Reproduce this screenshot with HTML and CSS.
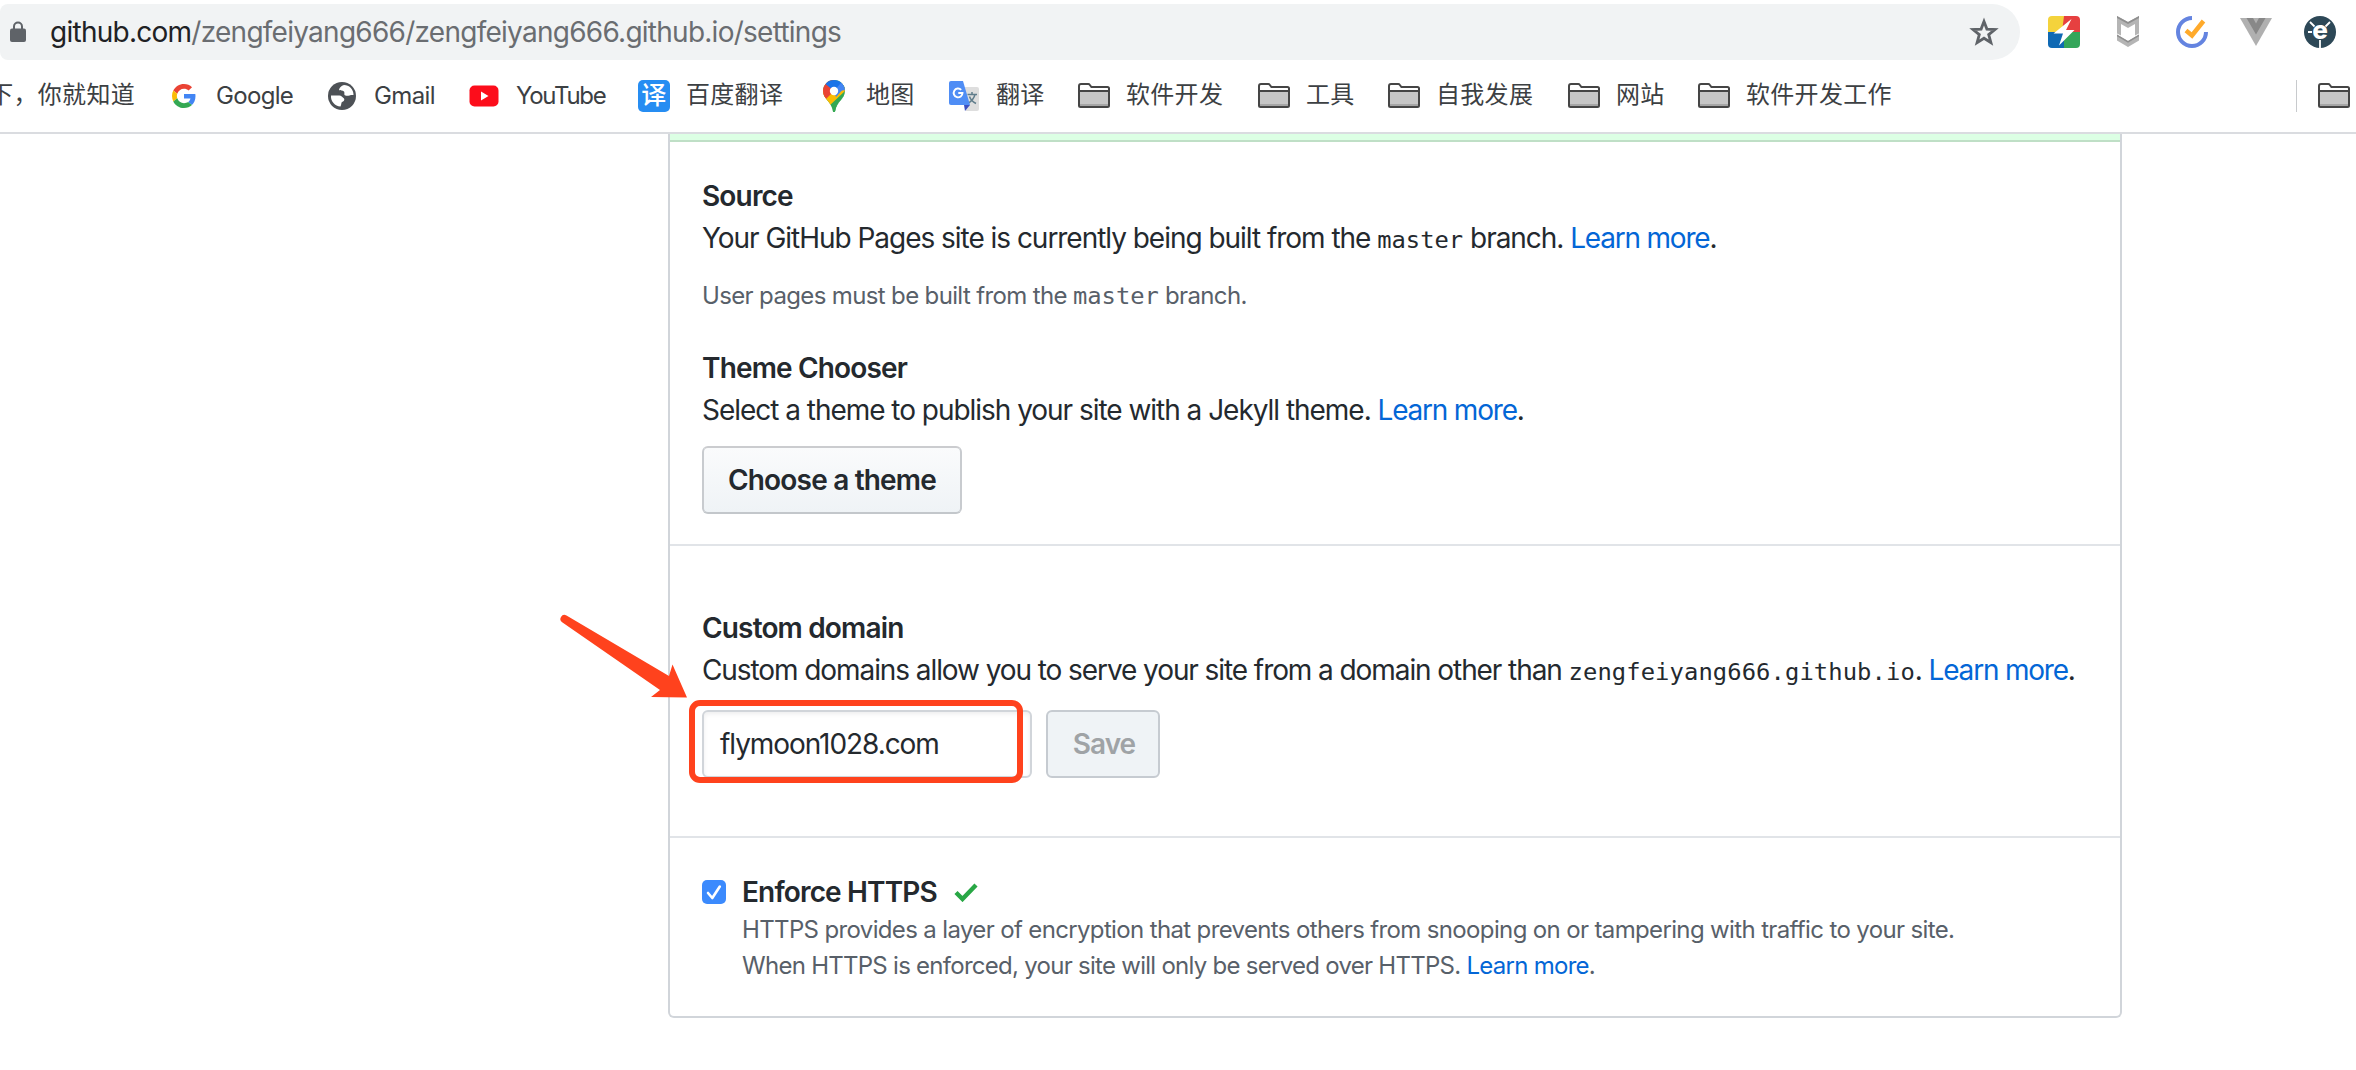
FILE: index.html
```
<!DOCTYPE html>
<html lang="en">
<head>
<meta charset="utf-8">
<title>Settings</title>
<link rel="stylesheet" href="styles.css">
</head>
<body>
<svg class="defs" width="0" height="0">
  <symbol id="folder" viewBox="0 0 32 26">
    <path d="M1 3.2Q1 1 3 1h7.2l3.2 3.2H29q2 0 2 2V22.500q0 1.500-1.500 1.500H2.500Q1 24 1 22.500z" fill="#fff"/>
    <path d="M2 8.500h28V23H2z" fill="#c6c6c6"/>
    <path d="M2 21h28v2.200H2z" fill="#a6a6a6"/>
    <path d="M1 8h30M1 3Q1 1 3 1h7.200q1 0 1.500.8L13.400 4H29.500q1.500 0 1.500 1.500V22.500q0 1.500-1.500 1.500H2.500Q1 24 1 22.500z" fill="none" stroke="#454545" stroke-width="2"/>
  </symbol>
</svg>

<header class="browser">
  <div class="toolbar">
    <div class="omnibox">
      <svg class="lock" width="16" height="22" viewBox="0 0 16 22"><path d="M4 9V5.500a4 4 0 0 1 8 0V9" fill="none" stroke="#5f6368" stroke-width="2"/><rect y="7.500" width="16" height="13.500" rx="2" fill="#5f6368"/></svg>
      <div class="url"><span class="host">github.com</span>/zengfeiyang666/zengfeiyang666.github.io/settings</div>
      <svg class="star" width="30" height="30" viewBox="0 0 30 30"><path d="M15 4.500l2.900 7.600 8.100.4-6.300 5.100 2.200 8L15 21.200l-6.900 4.400 2.200-8L4 12.500l8.100-.4z" fill="none" stroke="#5f6368" stroke-width="2.800"/></svg>
    </div>
    <div class="extensions">
      <svg width="32" height="32" viewBox="0 0 32 32"><path d="M4 0h15l-3 16H0V4Q0 0 4 0z" fill="#f4d33c"/><path d="M16 0h12q4 0 4 4v12H14z" fill="#e64040"/><path d="M0 16h16v16H4q-4 0-4-4z" fill="#0f69b4"/><path d="M16 16h16v12q0 4-4 4H16z" fill="#34a65a"/><path d="M23.500 3L5.500 17.500h9.500L11 29.500 26.500 14H18z" fill="#fff"/></svg>
      <svg width="32" height="32" viewBox="0 0 32 32"><path d="M5 0l11 6 11-6v17.500l-4 2V8l-7 4-7-4v11.500l-4-2z" fill="#b5b5b5"/><path d="M5 0l11 6 11-6v2L16 8 5 2z" fill="#8f8f8f"/><path d="M5 18.500l11 6.500 11-6.500v6L16 31 5 24.500z" fill="#b5b5b5"/><path d="M5 18.500l11 6.500 11-6.500v1.700l-11 6.500-11-6.500z" fill="#8f8f8f"/></svg>
      <svg width="32" height="32" viewBox="0 0 32 32"><path d="M16 2A14 14 0 1 0 30 16" fill="none" stroke="#6484e0" stroke-width="4"/><path d="M10 14.500l6 5L27.500 5" fill="none" stroke="#ffaa2b" stroke-width="4.500"/></svg>
      <svg width="32" height="32" viewBox="0 0 32 32"><path d="M0 2h32L16 30z" fill="#b0b0b0"/><path d="M6.500 2H13l3 5.500L19 2h6.500L16 18.500z" fill="#888"/></svg>
      <svg width="32" height="32" viewBox="0 0 32 32"><circle cx="16" cy="16" r="16" fill="#2d4857"/><path d="M6 6l4.500 4.500M26 6l-4.500 4.500M4 16h4M16 24v8" stroke="#fff" stroke-width="1.800"/><text class="glyph" x="16" y="22.500" text-anchor="middle">e</text></svg>
    </div>
  </div>

  <nav class="bookmarks">
    <div class="mark mark-first"><span class="label">下，你就知道</span></div>
    <div class="mark mark-google">
      <span class="icon"><svg width="24" height="24" viewBox="0 0 48 48"><path fill="#ea4335" d="M24 9.500c3.540 0 6.710 1.220 9.210 3.600l6.850-6.850C35.900 2.380 30.470 0 24 0 14.620 0 6.510 5.380 2.560 13.220l7.980 6.190C12.430 13.720 17.740 9.500 24 9.500z"/><path fill="#4285f4" d="M46.980 24.550c0-1.570-.15-3.090-.38-4.550H24v9.020h12.940c-.58 2.960-2.260 5.480-4.780 7.180l7.730 6c4.510-4.180 7.090-10.360 7.090-17.650z"/><path fill="#fbbc05" d="M10.530 28.590c-.48-1.450-.76-2.990-.76-4.590s.27-3.140.76-4.590l-7.980-6.190C.92 16.460 0 20.120 0 24c0 3.880.92 7.540 2.560 10.780l7.970-6.190z"/><path fill="#34a853" d="M24 48c6.480 0 11.930-2.130 15.890-5.810l-7.730-6c-2.150 1.450-4.920 2.300-8.160 2.300-6.260 0-11.570-4.220-13.470-9.910l-7.980 6.190C6.510 42.620 14.620 48 24 48z"/></svg></span>
      <span class="label">Google</span>
    </div>
    <div class="mark mark-gmail">
      <span class="icon"><svg width="28" height="28" viewBox="0 0 28 28"><circle cx="14" cy="14" r="14" fill="#4d5156"/><path d="M16 3c-3 1-4.500 2.500-5 5 1.500 1 3.500 0 5 1.500 1 1.500-.5 3.500 1.500 4 2.500.8 5-1 8-.5C25.500 7 21 3 16 3zM3 13.500h8.500c1.500 0 3 1.500 4.500 3 1 1.500-.5 3-2 3.500-1 1-.5 2.500-1.500 4.500C7 24 2.500 19.500 3 13.500z" fill="#fff"/></svg></span>
      <span class="label">Gmail</span>
    </div>
    <div class="mark mark-youtube">
      <span class="icon"><svg width="30" height="22" viewBox="0 0 30 22"><rect x=".5" y=".5" width="29" height="21" rx="5" fill="#fc0d1b"/><path d="M12 6.500v9l7.500-4.500z" fill="#fff"/></svg></span>
      <span class="label">YouTube</span>
    </div>
    <div class="mark mark-wide"><span class="icon icon-fanyi">译</span><span class="label">百度翻译</span></div>
    <div class="mark">
      <span class="icon"><svg width="22" height="32" viewBox="0 0 22 32"><defs><clipPath id="pin"><path d="M11 0a11 11 0 0 1 11 11c0 8-8.500 10.500-9.800 20q-.2 1-1.200 1t-1.200-1C8.500 21.500 0 19 0 11A11 11 0 0 1 11 0z"/></clipPath></defs><g clip-path="url(#pin)"><path d="M0 0h22v32H0z" fill="#34a853"/><path d="M-2 8L11 11 22 -2v13L5 27l-7-6z" fill="#fbbc04"/><path d="M11 11L19 2l6 9-11 14-5 7h13V8z" fill="#34a853"/><path d="M0 0h11v11L3 19l-5-6z" fill="#ea4335"/><path d="M2.500 4L11 11 20 3 15-2H4z" fill="#1a73e8"/><path d="M11 11l7.500-8.500L24 10z" fill="#4285f4"/><path d="M11 11L19 2l3 5-9 10z" fill="#4285f4"/></g><circle cx="11" cy="11" r="4.200" fill="#fff"/></svg></span>
      <span class="label">地图</span>
    </div>
    <div class="mark">
      <span class="icon"><svg width="30" height="30" viewBox="0 0 30 30"><path d="M12 6h16q2 0 2 2v20q0 2-2 2H17z" fill="#dedede"/><path d="M18.500 13.500h9.500M23 11v2.500M26 13.500c-1 4-4 7-7 9M20.500 15.500c1 3 3.500 5.500 6.500 7" fill="none" stroke="#607d8b" stroke-width="1.500"/><path d="M15 24h6l-5 6z" fill="#3c4fc0"/><path d="M2 0h12l7 24H2q-2 0-2-2V2Q0 0 2 0z" fill="#4f8df5"/><path d="M12.200 8.800A4.400 4.400 0 1 0 13.500 12H9.300" fill="none" stroke="#fff" stroke-width="1.900"/></svg></span>
      <span class="label">翻译</span>
    </div>
    <div class="mark mark-wide"><span class="icon"><svg width="32" height="26"><use href="#folder"/></svg></span><span class="label">软件开发</span></div>
    <div class="mark"><span class="icon"><svg width="32" height="26"><use href="#folder"/></svg></span><span class="label">工具</span></div>
    <div class="mark mark-wide"><span class="icon"><svg width="32" height="26"><use href="#folder"/></svg></span><span class="label">自我发展</span></div>
    <div class="mark"><span class="icon"><svg width="32" height="26"><use href="#folder"/></svg></span><span class="label">网站</span></div>
    <div class="mark mark-last"><span class="icon"><svg width="32" height="26"><use href="#folder"/></svg></span><span class="label">软件开发工作</span></div>
    <div class="other"><svg width="32" height="26"><use href="#folder"/></svg></div>
  </nav>
</header>

<main class="panel">
  <div class="flash"></div>
  <section class="source">
    <h5>Source</h5>
    <p class="lead">Your GitHub Pages site is currently being built from the <code>master</code> branch. <a>Learn more</a>.</p>
    <p class="note">User pages must be built from the <code>master</code> branch.</p>
    <h5>Theme Chooser</h5>
    <p class="lead">Select a theme to publish your site with a Jekyll theme. <a>Learn more</a>.</p>
    <button class="btn btn-theme">Choose a theme</button>
  </section>
  <section class="domain">
    <h5>Custom domain</h5>
    <p class="lead">Custom domains allow you to serve your site from a domain other than <code>zengfeiyang666.github.io</code>. <a>Learn more</a>.</p>
    <div class="form">
      <div class="field">flymoon1028.com</div>
      <button class="btn btn-save">Save</button>
      <div class="highlight"></div>
      <svg class="arrow" width="130" height="88" viewBox="0 0 130 88"><path d="M6.500 1.500L109 62l3.500-11.500L127 83.500l-36-.5 9-7L2.500 8.500A4 4 0 0 1 6.500 1.500z" fill="#ff421d"/></svg>
    </div>
  </section>
  <section class="https">
    <svg class="checkbox" width="24" height="24" viewBox="0 0 24 24"><rect width="24" height="24" rx="5" fill="#3b8afd"/><path d="M6 13l4.300 5L17.800 6.500" fill="none" stroke="#fff" stroke-width="2.600" stroke-linecap="round" stroke-linejoin="round"/></svg>
    <div>
      <div class="title"><h5>Enforce HTTPS</h5><svg width="24" height="20" viewBox="0 0 24 20"><path d="M2 10.500l6.500 6.500L22 3" fill="none" stroke="#28a745" stroke-width="4.400"/></svg></div>
      <p class="note">HTTPS provides a layer of encryption that prevents others from snooping on or tampering with traffic to your site.</p>
      <p class="note note-tight">When HTTPS is enforced, your site will only be served over HTTPS. <a>Learn more</a>.</p>
    </div>
  </section>
</main>
</body>
</html>
```

FILE: styles.css
```
* { box-sizing: border-box; }

body {
  margin: 0;
  height: 1070px;
  overflow: hidden;
  background: #fff;
  color: #24292e;
  font-family: Inter, "Noto Sans CJK SC", sans-serif;
}

svg { display: block; flex: none; }
.defs { position: absolute; }
h5, p { margin: 0; }

/* Browser toolbar */
.browser { height: 134px; border-bottom: 2px solid #dadce0; }
.toolbar { display: flex; height: 64px; }
.omnibox {
  display: flex;
  align-items: center;
  width: 2020px;
  height: 56px;
  margin-top: 4px;
  padding: 0 21px 0 10px;
  border-radius: 8px 28px 28px 8px;
  background: #f1f3f4;
}
.lock { margin-right: 24px; }
.url {
  flex: 1;
  padding-bottom: 1px;
  color: #6a6d71;
  font-size: 28px;
  letter-spacing: -0.0265em;
  white-space: nowrap;
}
.host { color: #202124; }
.extensions { display: flex; gap: 32px; padding: 16px 0 0 28px; }
.glyph { fill: #fff; font-size: 26px; font-weight: 800; }

/* Bookmarks */
.bookmarks {
  display: flex;
  align-items: center;
  height: 64px;
  color: #3c4043;
  font-size: 24px;
  white-space: nowrap;
}
.mark { display: flex; flex: none; gap: 16px; align-items: center; width: 130px; letter-spacing: 0.3px; }
.label { line-height: 36px; padding-bottom: 2px; }
.mark-first { justify-content: flex-end; width: 168px; padding-right: 33px; }
.mark-google { width: 158px; letter-spacing: -0.028em; }
.mark-gmail { width: 142px; letter-spacing: -0.025em; }
.mark-youtube { width: 170px; letter-spacing: -0.053em; }
.mark-google .label, .mark-gmail .label, .mark-youtube .label { padding-bottom: 1px; }
.mark-wide { width: 180px; }
.mark-last { width: 200px; }
.icon { display: flex; flex: none; justify-content: center; width: 32px; }
.icon-fanyi {
  height: 32px;
  border-radius: 5px;
  background: #268df2;
  color: #fff;
  font-size: 25px;
  font-weight: 500;
  line-height: 30px;
}
.other {
  display: flex;
  align-items: center;
  height: 32px;
  margin-left: auto;
  padding: 0 6px 0 21px;
  border-left: 1px solid #c8cacd;
}

/* Settings panel */
.panel {
  width: 1454px;
  height: 884px;
  margin-left: 668px;
  border: 2px solid #d1d5da;
  border-top: 0;
  border-radius: 0 0 6px 6px;
}
.flash { height: 8px; border-bottom: 2px solid #bfdfc6; background: #dcffe4; }
h5 { font-size: 28px; font-weight: 600; line-height: 42px; letter-spacing: -0.03em; }
.lead { font-size: 28px; line-height: 42px; letter-spacing: -0.0368em; white-space: nowrap; }
.note { color: #586069; font-size: 24px; line-height: 36px; letter-spacing: -0.0267em; white-space: nowrap; }
.note-tight { letter-spacing: -0.0303em; }
a { color: #0366d6; }
.lead a { letter-spacing: -0.043em; }
code { font: 23.8px/0 "DejaVu Sans Mono", monospace; letter-spacing: 0; }
.source { height: 404px; padding: 33px 32px 0; border-bottom: 2px solid #e1e4e8; }
.source .note { margin: 19px 0 33px; }
.btn {
  display: block;
  height: 68px;
  padding: 0;
  border: 2px solid #c6cbd1;
  border-radius: 6px;
  font-family: inherit;
  font-size: 28px;
  font-weight: 600;
  letter-spacing: -0.029em;
}
.btn-theme {
  width: 260px;
  margin-top: 15px;
  border-color: #cbcccf #c8cbcf #c3c7cb;
  background: linear-gradient(#fafbfc, #eff3f6);
  color: #24292e;
}
.domain { height: 292px; padding: 61px 32px 0; border-bottom: 2px solid #e1e4e8; }
.domain .lead { letter-spacing: -0.0386em; }
.domain code { letter-spacing: 0.1px; }
.form { position: relative; display: flex; gap: 14px; margin-top: 19px; }
.field {
  width: 330px;
  height: 68px;
  padding: 0 16px;
  border: 2px solid #d1d5da;
  border-radius: 6px;
  box-shadow: inset 0 2px 4px rgba(27, 31, 35, 0.075);
  font-size: 28px;
  line-height: 64px;
  letter-spacing: -0.038em;
}
.btn-save { width: 114px; padding-left: 2px; background: #eff3f6; color: #9fa3a6; letter-spacing: -0.036em; }
.highlight {
  position: absolute;
  left: -13px;
  top: -10px;
  width: 334px;
  height: 83px;
  border: 6px solid #ff421d;
  border-radius: 11px;
}
.arrow { position: absolute; left: -142px; top: -96px; }
.https { display: flex; gap: 16px; padding: 35px 32px 0; }
.checkbox { margin-top: 7px; }
.title { display: flex; gap: 17px; align-items: center; margin-bottom: 1px; }
.title h5 { line-height: 38px; }
```
